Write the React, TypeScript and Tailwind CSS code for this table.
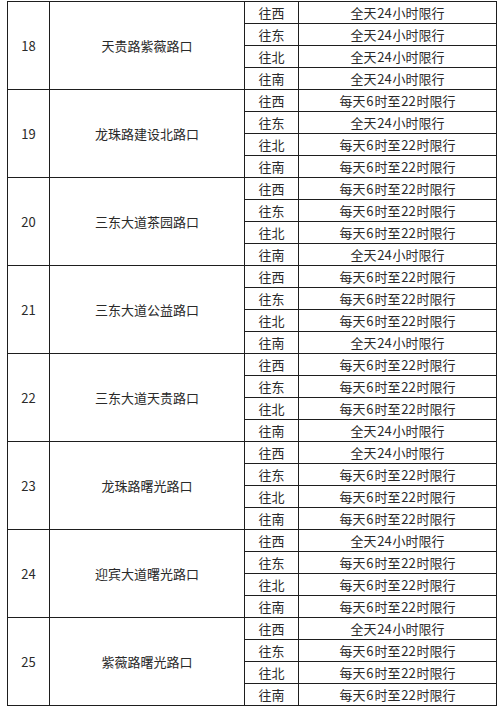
type Group = {
  no: number;
  name: string;
  rows: [string, string][];
};

const ALL = "全天\u200A24\u200A小时限行";
const DAY = "每天\u200A6\u200A时至\u200A22\u200A时限行";

const groups: Group[] = [
  { no: 18, name: "天贵路紫薇路口", rows: [["往西", ALL], ["往东", ALL], ["往北", ALL], ["往南", ALL]] },
  { no: 19, name: "龙珠路建设北路口", rows: [["往西", DAY], ["往东", ALL], ["往北", DAY], ["往南", DAY]] },
  { no: 20, name: "三东大道茶园路口", rows: [["往西", DAY], ["往东", DAY], ["往北", DAY], ["往南", ALL]] },
  { no: 21, name: "三东大道公益路口", rows: [["往西", DAY], ["往东", DAY], ["往北", DAY], ["往南", ALL]] },
  { no: 22, name: "三东大道天贵路口", rows: [["往西", DAY], ["往东", DAY], ["往北", DAY], ["往南", ALL]] },
  { no: 23, name: "龙珠路曙光路口", rows: [["往西", ALL], ["往东", DAY], ["往北", DAY], ["往南", DAY]] },
  { no: 24, name: "迎宾大道曙光路口", rows: [["往西", ALL], ["往东", DAY], ["往北", DAY], ["往南", DAY]] },
  { no: 25, name: "紫薇路曙光路口", rows: [["往西", ALL], ["往东", DAY], ["往北", DAY], ["往南", DAY]] },
];

const cell = "border border-[#1e1e1e] p-0 text-center align-middle";

export default function App() {
  return (
    <div className="h-[715px] w-[500px] bg-white pt-[1px] pl-[7px] font-['SimSun','Noto_Sans_CJK_SC',sans-serif] text-[13px] leading-none text-[#2a2a2a]">
      <table className="w-[489px] table-fixed border-collapse">
        <colgroup>
          <col className="w-[42px]" />
          <col className="w-[195px]" />
          <col className="w-[54px]" />
          <col className="w-[198px]" />
        </colgroup>
        <tbody>
          {groups.map((g) =>
            g.rows.map(([dir, rule], i) => (
              <tr key={`${g.no}-${i}`} className="h-[22px]">
                {i === 0 ? (
                  <>
                    <td rowSpan={4} className={cell}>
                      {g.no}
                    </td>
                    <td rowSpan={4} className={cell}>
                      {g.name}
                    </td>
                  </>
                ) : null}
                <td className={cell}>{dir}</td>
                <td className={`${cell} whitespace-pre`}>{rule}</td>
              </tr>
            )),
          )}
        </tbody>
      </table>
    </div>
  );
}
